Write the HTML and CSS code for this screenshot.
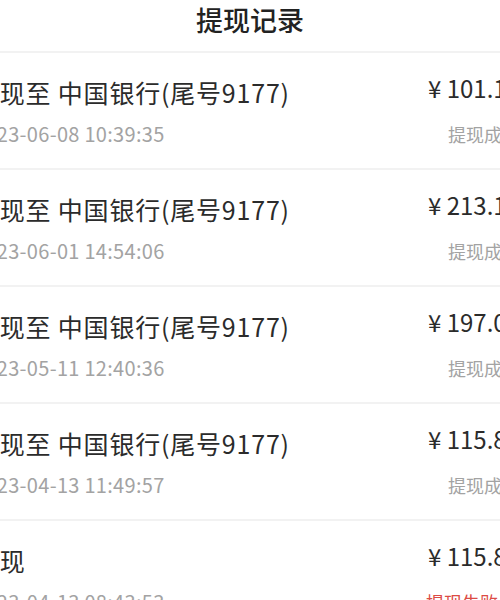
FILE: index.html
```html
<!DOCTYPE html>
<html lang="zh-CN">
<head>
  <meta charset="UTF-8">
  <meta name="viewport" content="width=device-width, initial-scale=1.0">
  <title>提现记录</title>
  <link rel="stylesheet" href="styles.css">
</head>
<body>
  <header class="top-bar">
    <h1>提现记录</h1>
  </header>

  <ul class="record-list">
    <li class="record">
      <div class="record-main">
        <p class="record-title">提现至 中国银行(尾号9177)</p>
        <p class="record-time">2023-06-08 10:39:35</p>
      </div>
      <div class="record-side">
        <p class="record-amount">¥ 101.10</p>
        <p class="record-status">提现成功</p>
      </div>
    </li>
    <li class="record">
      <div class="record-main">
        <p class="record-title">提现至 中国银行(尾号9177)</p>
        <p class="record-time">2023-06-01 14:54:06</p>
      </div>
      <div class="record-side">
        <p class="record-amount">¥ 213.10</p>
        <p class="record-status">提现成功</p>
      </div>
    </li>
    <li class="record">
      <div class="record-main">
        <p class="record-title">提现至 中国银行(尾号9177)</p>
        <p class="record-time">2023-05-11 12:40:36</p>
      </div>
      <div class="record-side">
        <p class="record-amount">¥ 197.00</p>
        <p class="record-status">提现成功</p>
      </div>
    </li>
    <li class="record">
      <div class="record-main">
        <p class="record-title">提现至 中国银行(尾号9177)</p>
        <p class="record-time">2023-04-13 11:49:57</p>
      </div>
      <div class="record-side">
        <p class="record-amount">¥ 115.80</p>
        <p class="record-status">提现成功</p>
      </div>
    </li>
    <li class="record">
      <div class="record-main">
        <p class="record-title">提现</p>
        <p class="record-time">2023-04-13 08:43:53</p>
      </div>
      <div class="record-side">
        <p class="record-amount">¥ 115.80</p>
        <p class="record-status failed">提现失败</p>
      </div>
    </li>
  </ul>
</body>
</html>
```

FILE: styles.css
```css
:root {
  --text-color: #2b2b2b;
  --muted-color: #a3a3a3;
  --line-color: #f2f2f2;
  --fail-color: #dc4b45;
}

* {
  margin: 0;
  padding: 0;
  box-sizing: border-box;
  font-family: 'Noto Sans CJK SC', 'Noto Sans', sans-serif;
}

body {
  background: #ffffff;
  color: var(--text-color);
  overflow: hidden;
}

.top-bar {
  height: 53px;
  display: flex;
  align-items: center;
  justify-content: center;
  border-bottom: 2px solid var(--line-color);
  padding-bottom: 13px;
}

.top-bar h1 {
  font-size: 27px;
  font-weight: 500;
  line-height: 1;
  color: #222;
}

/* the list is wider than the window, as in the capture */
.record-list {
  list-style: none;
  margin: 0 -36px 0 -42px;
}

.record {
  display: flex;
  justify-content: space-between;
  height: 117px;
  padding: 22px 16px 0;
  border-bottom: 2px solid var(--line-color);
}

.record-main,
.record-side {
  display: flex;
  flex-direction: column;
  gap: 12px;
}

.record-side {
  align-items: flex-end;
}

.record-title,
.record-amount {
  font-size: 25px;
  line-height: 34px;
  color: var(--text-color);
}

.record-title {
  letter-spacing: 0.8px;
}

.record-amount {
  font-size: 24px;
  margin-top: -4px;
  margin-bottom: 4px;
}

.record-time {
  font-size: 20px;
  line-height: 26px;
  letter-spacing: 0.3px;
  color: var(--muted-color);
}

.record-status {
  font-size: 18px;
  line-height: 26px;
  color: var(--muted-color);
}

.record-status.failed {
  color: var(--fail-color);
  margin-right: 22px;
}
```
